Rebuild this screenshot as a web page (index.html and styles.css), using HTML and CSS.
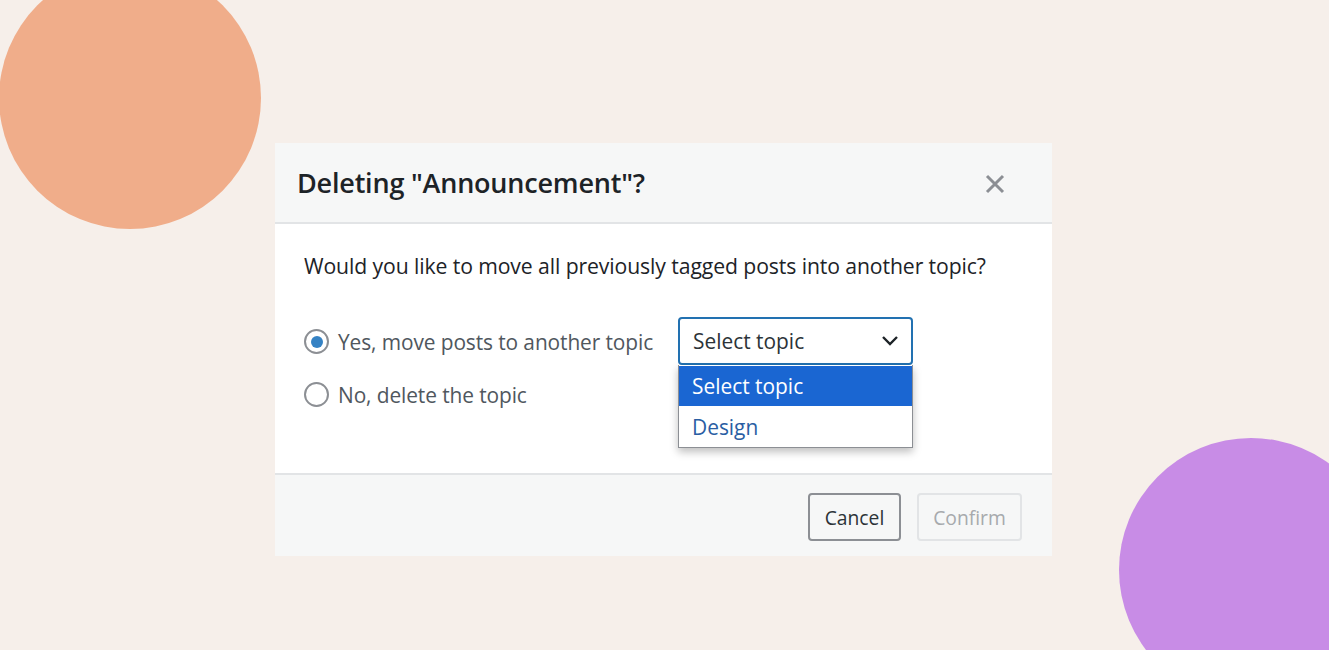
FILE: index.html
```html
<!DOCTYPE html>
<html>
<head>
<meta charset="utf-8">
<link rel="stylesheet" href="styles.css">
</head>
<body>
<div class="stage">
  <div class="blob blob-orange"></div>
  <div class="blob blob-purple"></div>
  <div class="dialog">
    <div class="dialog-header">
      <h1 class="dialog-title">Deleting "Announcement"?</h1>
      <svg class="close" width="20" height="20" viewBox="0 0 20 20"><path d="M2 2L18 18M18 2L2 18" stroke="#8c8f94" stroke-width="3" fill="none"/></svg>
    </div>
    <div class="dialog-body">
      <p class="question">Would you like to move all previously tagged posts into another topic?</p>
      <div class="options">
        <div class="radios">
          <label class="radio-row"><span class="radio checked"></span><span class="radio-label">Yes, move posts to another topic</span></label>
          <label class="radio-row"><span class="radio"></span><span class="radio-label">No, delete the topic</span></label>
        </div>
        <div class="select-wrap">
          <div class="select">
            <span>Select topic</span>
            <svg class="chev" width="18" height="12" viewBox="0 0 18 12"><path d="M2 2L9 9L16 2" stroke="#1d2327" stroke-width="2.4" fill="none"/></svg>
          </div>
          <ul class="menu">
            <li class="opt active">Select topic</li>
            <li class="opt">Design</li>
          </ul>
        </div>
      </div>
    </div>
    <div class="dialog-footer">
      <button class="btn btn-cancel">Cancel</button>
      <button class="btn btn-disabled">Confirm</button>
    </div>
  </div>
</div>
</body>
</html>
```
FILE: styles.css
```css
html, body {
  margin: 0;
  padding: 0;
}
body {
  background: #f6efea;
  font-family: "Open Sans", "Noto Sans", sans-serif;
}
.stage {
  width: 1329px;
  height: 650px;
  overflow: hidden;
  position: relative;
  padding-top: 143px;
  box-sizing: border-box;
}
.blob {
  position: absolute;
  border-radius: 50%;
}
.blob-orange {
  width: 262px;
  height: 262px;
  left: -1px;
  top: -33px;
  background: #f0ad8a;
}
.blob-purple {
  width: 264px;
  height: 264px;
  left: 1119px;
  top: 438px;
  background: #c88ce6;
}
.dialog {
  position: relative;
  margin-left: 275px;
  width: 777px;
  background: #fff;
  display: flex;
  flex-direction: column;
}
.dialog-header {
  height: 79px;
  background: #f6f7f7;
  border-bottom: 2px solid #e2e4e6;
  display: flex;
  align-items: center;
  justify-content: space-between;
  padding: 0 47px 0 22px;
}
.dialog-title {
  margin: 0;
  font-size: 27px;
  font-weight: 600;
  color: #1d2327;
  letter-spacing: -0.2px;
}
.close {
  display: block;
  margin-top: 2px;
}
.dialog-body {
  height: 249px;
  padding: 0 29px;
}
.question {
  margin: 28px 0 0 0;
  font-size: 21.2px;
  line-height: 28px;
  color: #1d2327;
  letter-spacing: -0.1px;
}
.options {
  display: flex;
  margin-top: 37px;
}
.radios {
  width: 374px;
  display: flex;
  flex-direction: column;
  gap: 6px;
  padding-top: 1px;
}
.radio-row {
  display: flex;
  align-items: center;
  height: 47px;
  gap: 9px;
}
.radio {
  width: 25px;
  height: 25px;
  box-sizing: border-box;
  border: 2px solid #8c8f94;
  border-radius: 50%;
  display: flex;
  align-items: center;
  justify-content: center;
}
.radio.checked::after {
  content: "";
  width: 12px;
  height: 12px;
  border-radius: 50%;
  background: #3582c4;
}
.radio-label {
  font-size: 20.9px;
  color: #50575e;
  letter-spacing: -0.1px;
}
.select-wrap {
  position: relative;
  width: 235px;
}
.select {
  height: 48px;
  box-sizing: border-box;
  border: 2px solid #2271b1;
  border-radius: 4px;
  display: flex;
  align-items: center;
  justify-content: space-between;
  padding: 0 12px 0 13px;
  font-size: 20.9px;
  color: #2c3338;
}
.chev {
  display: block;
}
.menu {
  position: absolute;
  left: 0;
  top: 48px;
  width: 235px;
  box-sizing: border-box;
  margin: 0;
  padding: 0;
  list-style: none;
  background: #fff;
  border: 1px solid #8c8f94;
  border-top: none;
  box-shadow: 0 4px 8px rgba(0,0,0,0.25);
}
.opt {
  height: 41px;
  display: flex;
  align-items: center;
  padding-left: 13px;
  font-size: 20.9px;
  color: #2a5ea3;
}
.opt.active {
  background: #1a66d2;
  color: #fff;
  height: 40px;
  margin-top: 1px;
}
.dialog-footer {
  height: 81px;
  background: #f6f7f7;
  border-top: 2px solid #e2e4e6;
  display: flex;
  align-items: center;
  justify-content: flex-end;
  gap: 16px;
  padding: 0 30px 0 0;
}
.btn {
  height: 48px;
  box-sizing: border-box;
  font-family: inherit;
  font-size: 19.3px;
  padding: 0;
  border-radius: 4px;
  background: #f6f7f7;
  border: 2px solid #8c8f94;
  color: #2c3338;
  margin-top: 3px;
}
.btn-cancel {
  width: 93px;
}
.btn-disabled {
  border-color: #e2e4e6;
  color: #a7aaad;
  width: 105px;
}
```
